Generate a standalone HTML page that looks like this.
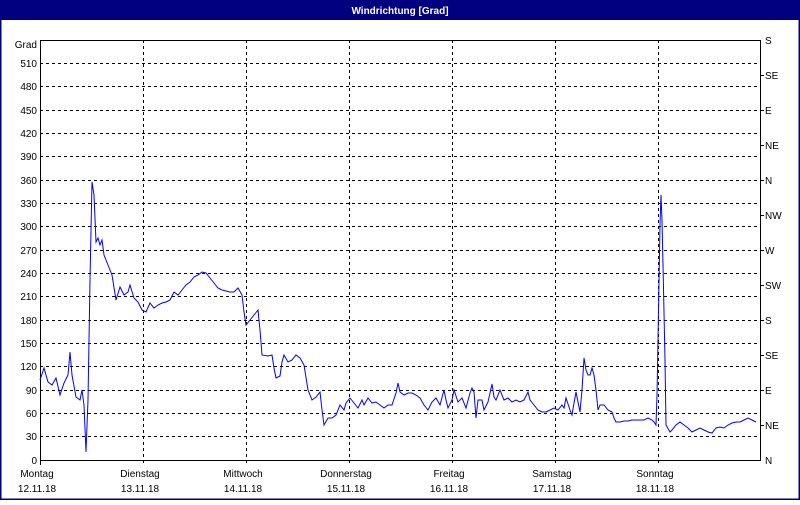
<!DOCTYPE html>
<html><head><meta charset="utf-8"><style>
html,body{margin:0;padding:0;background:#fff}
body{width:800px;height:500px;overflow:hidden;font-family:"Liberation Sans",sans-serif}
</style></head><body>
<svg width="800" height="500" xmlns="http://www.w3.org/2000/svg" font-family="Liberation Sans, sans-serif" font-size="10">
<rect x="0" y="0" width="800" height="500" fill="#fff"/>
<rect x="0" y="0" width="800" height="20" fill="#000080"/>
<rect x="0.5" y="0.5" width="799" height="499" fill="none" stroke="#000080" stroke-width="2"/>
<text x="400" y="14" fill="#fff" font-weight="bold" font-size="10" text-anchor="middle">Windrichtung [Grad]</text>
<g stroke="#000" stroke-dasharray="3,3" stroke-width="1">
<line x1="40" y1="63.5" x2="760" y2="63.5"/><line x1="40" y1="86.5" x2="760" y2="86.5"/><line x1="40" y1="110.5" x2="760" y2="110.5"/><line x1="40" y1="133.5" x2="760" y2="133.5"/><line x1="40" y1="156.5" x2="760" y2="156.5"/><line x1="40" y1="180.5" x2="760" y2="180.5"/><line x1="40" y1="203.5" x2="760" y2="203.5"/><line x1="40" y1="226.5" x2="760" y2="226.5"/><line x1="40" y1="250.5" x2="760" y2="250.5"/><line x1="40" y1="273.5" x2="760" y2="273.5"/><line x1="40" y1="296.5" x2="760" y2="296.5"/><line x1="40" y1="320.5" x2="760" y2="320.5"/><line x1="40" y1="343.5" x2="760" y2="343.5"/><line x1="40" y1="366.5" x2="760" y2="366.5"/><line x1="40" y1="390.5" x2="760" y2="390.5"/><line x1="40" y1="413.5" x2="760" y2="413.5"/><line x1="40" y1="436.5" x2="760" y2="436.5"/>
<line x1="143.5" y1="40" x2="143.5" y2="465"/><line x1="246.5" y1="40" x2="246.5" y2="465"/><line x1="349.5" y1="40" x2="349.5" y2="465"/><line x1="452.5" y1="40" x2="452.5" y2="465"/><line x1="555.5" y1="40" x2="555.5" y2="465"/><line x1="658.5" y1="40" x2="658.5" y2="465"/>
</g>
<polyline fill="none" stroke="#000" stroke-width="1" points="40.5,40 40.5,460.5 760.5,460.5 760.5,40.5 40,40.5"/>
<line x1="40.5" y1="460" x2="40.5" y2="465" stroke="#000"/>
<g stroke="#000"><line x1="760" y1="75.5" x2="764" y2="75.5"/><line x1="760" y1="110.5" x2="764" y2="110.5"/><line x1="760" y1="145.5" x2="764" y2="145.5"/><line x1="760" y1="180.5" x2="764" y2="180.5"/><line x1="760" y1="215.5" x2="764" y2="215.5"/><line x1="760" y1="250.5" x2="764" y2="250.5"/><line x1="760" y1="285.5" x2="764" y2="285.5"/><line x1="760" y1="320.5" x2="764" y2="320.5"/><line x1="760" y1="355.5" x2="764" y2="355.5"/><line x1="760" y1="390.5" x2="764" y2="390.5"/><line x1="760" y1="425.5" x2="764" y2="425.5"/></g>
<g text-anchor="end" fill="#000">
<text x="37" y="48">Grad</text><text x="37" y="67">510</text><text x="37" y="90">480</text><text x="37" y="114">450</text><text x="37" y="137">420</text><text x="37" y="160">390</text><text x="37" y="184">360</text><text x="37" y="207">330</text><text x="37" y="230">300</text><text x="37" y="254">270</text><text x="37" y="277">240</text><text x="37" y="300">210</text><text x="37" y="324">180</text><text x="37" y="347">150</text><text x="37" y="370">120</text><text x="37" y="394">90</text><text x="37" y="417">60</text><text x="37" y="440">30</text><text x="37" y="464">0</text>
</g>
<g fill="#000">
<text x="765" y="44">S</text><text x="765" y="79">SE</text><text x="765" y="114">E</text><text x="765" y="149">NE</text><text x="765" y="184">N</text><text x="765" y="219">NW</text><text x="765" y="254">W</text><text x="765" y="289">SW</text><text x="765" y="324">S</text><text x="765" y="359">SE</text><text x="765" y="394">E</text><text x="765" y="429">NE</text><text x="765" y="464">N</text>
</g>
<g text-anchor="middle" fill="#000">
<text x="37" y="477">Montag</text><text x="37" y="492">12.11.18</text>
<text x="140" y="477">Dienstag</text><text x="140" y="492">13.11.18</text>
<text x="243" y="477">Mittwoch</text><text x="243" y="492">14.11.18</text>
<text x="346" y="477">Donnerstag</text><text x="346" y="492">15.11.18</text>
<text x="449" y="477">Freitag</text><text x="449" y="492">16.11.18</text>
<text x="552" y="477">Samstag</text><text x="552" y="492">17.11.18</text>
<text x="655" y="477">Sonntag</text><text x="655" y="492">18.11.18</text>
</g>
<polyline fill="none" stroke="#0000ff" stroke-width="1" points="40,380 44,368 48,382 52,385 56,378 60,395 64,383 68,375 70,352 72,375 76,397 80,400 82,390 84,405 86,452 88,400 90,280 92,182 94,195 96,242 98,238 100,245 102,240 104,255 108,265 112,275 116,300 120,287 124,295 128,292 130,285 134,298 138,302 142,310 146,312 150,303 154,308 158,305 162,303 166,302 170,300 174,292 178,295 182,290 186,285 190,282 194,277 198,275 202,272 206,273 210,278 214,283 218,288 222,290 226,291 230,292 234,292 238,288 242,295 244,312 246,325 250,320 254,315 258,310 260,330 262,355 268,356 272,355 274,368 276,378 280,376 282,362 284,355 288,362 292,360 296,355 300,358 304,365 308,390 312,400 316,397 320,392 322,410 324,425 328,418 332,418 336,415 340,405 344,410 346,403 350,398 354,403 358,408 362,400 364,405 368,398 372,403 376,402 380,405 384,408 388,405 392,405 396,393 398,383 400,392 404,395 408,393 412,393 416,395 420,398 424,405 428,410 432,402 436,398 440,405 444,390 446,400 448,408 452,400 454,390 458,402 462,398 466,408 470,393 472,388 474,392 476,418 478,400 482,400 484,410 488,402 490,393 492,384 494,397 496,400 500,390 504,400 508,398 512,402 516,400 520,402 524,400 528,392 530,400 534,405 538,410 542,412 546,412 550,410 554,408 558,410 562,405 564,408 566,398 570,410 572,415 574,403 576,392 578,402 580,412 582,390 584,358 586,370 588,375 590,375 592,368 594,375 596,390 598,410 600,405 604,405 608,410 612,412 614,418 616,422 620,422 624,421 628,421 632,420 636,420 640,420 644,420 648,418 652,420 654,422 656,425 657,395 658,340 660,225 661,195 662,220 663,265 665,360 666,425 670,432 672,430 676,425 680,422 684,425 688,428 692,432 696,430 700,428 704,430 708,432 712,433 716,428 720,427 724,428 728,425 732,423 736,422 740,422 744,420 748,418 752,420 756,422"/>
</svg>
</body></html>
